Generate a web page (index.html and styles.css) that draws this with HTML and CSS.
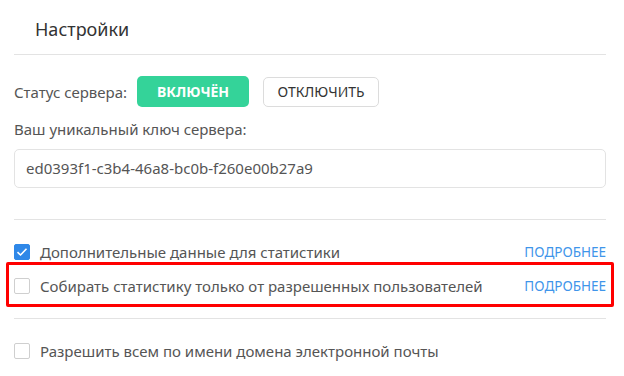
FILE: index.html
```html
<!DOCTYPE html>
<html lang="ru">
<head>
    <meta charset="UTF-8">
    <meta name="viewport" content="width=device-width, initial-scale=1.0">
    <title>Настройки</title>
    <link rel="stylesheet" href="styles.css">
</head>
<body>
    <div class="settings">
        <div class="settings-header">Настройки</div>

        <div class="status-row">
            <span class="status-label">Статус сервера:</span>
            <button class="btn btn-on">ВКЛЮЧЁН</button>
            <button class="btn btn-off">ОТКЛЮЧИТЬ</button>
        </div>

        <div class="key-label">Ваш уникальный ключ сервера:</div>
        <div class="key-box">ed0393f1-c3b4-46a8-bc0b-f260e00b27a9</div>

        <div class="divider"></div>

        <div class="option-row">
            <label class="option">
                <span class="checkbox checked">
                    <svg width="12" height="10" viewBox="0 0 12 10"><path d="M1.5 5.2 L4.5 8 L10.5 1.8" fill="none" stroke="#fff" stroke-width="1.6"/></svg>
                </span>
                Дополнительные данные для статистики
            </label>
            <a class="more-link" href="#">ПОДРОБНЕЕ</a>
        </div>

        <div class="option-row highlighted">
            <label class="option">
                <span class="checkbox"></span>
                Собирать статистику только от разрешенных пользователей
            </label>
            <a class="more-link" href="#">ПОДРОБНЕЕ</a>
        </div>

        <div class="divider divider-tight"></div>

        <div class="option-row">
            <label class="option">
                <span class="checkbox"></span>
                Разрешить всем по имени домена электронной почты
            </label>
        </div>
    </div>
</body>
</html>
```

FILE: styles.css
```css
body {
    margin: 0;
    background-color: #fff;
    font-family: "Noto Sans", "Open Sans", sans-serif;
    font-size: 15px;
    color: #555;
}

.settings {
    padding: 0 18px 0 14px;
}

.settings-header {
    height: 55px;
    box-sizing: border-box;
    line-height: 58px;
    padding-left: 21px;
    font-size: 18px;
    color: #333;
    border-bottom: 1px solid #e3e3e3;
}

.status-row {
    display: flex;
    align-items: center;
    margin-top: 21px;
}

.status-label {
    margin-right: 10px;
}

.btn {
    font-family: inherit;
    font-size: 14px;
    height: 31px;
    border-radius: 5px;
    cursor: pointer;
}

.btn-on {
    width: 112px;
    background-color: #34d399;
    color: #fff;
    font-weight: bold;
    border: none;
    margin-right: 14px;
}

.btn-off {
    width: 116px;
    height: 30px;
    background-color: #fff;
    color: #333;
    border: 1px solid #dcdcdc;
}

.key-label {
    margin-top: 12px;
    line-height: 20px;
}

.key-box {
    margin-top: 10px;
    height: 39px;
    box-sizing: border-box;
    border: 1px solid #e3e3e3;
    border-radius: 5px;
    padding-left: 11px;
    line-height: 37px;
}

.divider {
    border-top: 1px solid #e3e3e3;
    margin-top: 31px;
    margin-bottom: 22px;
}

.divider-tight {
    margin-top: 11px;
}

.option-row {
    display: flex;
    align-items: center;
    justify-content: space-between;
    height: 20px;
}

.option-row.highlighted {
    margin: 0 -8px;
    height: 39px;
    padding: 2px 5px 0 5px;
    box-sizing: content-box;
    height: 37px;
    border: 3px solid #ff0000;
    border-radius: 2px;
}

.option {
    display: flex;
    align-items: center;
}

.checkbox {
    width: 16px;
    height: 16px;
    box-sizing: border-box;
    border: 1px solid #cfcfcf;
    border-radius: 2px;
    margin-right: 10px;
    display: flex;
    align-items: center;
    justify-content: center;
}

.checkbox.checked {
    background-color: #2f88e8;
    border-color: #2f88e8;
}

.more-link {
    color: #3f95ea;
    text-decoration: none;
    font-size: 13.5px;
}
```
